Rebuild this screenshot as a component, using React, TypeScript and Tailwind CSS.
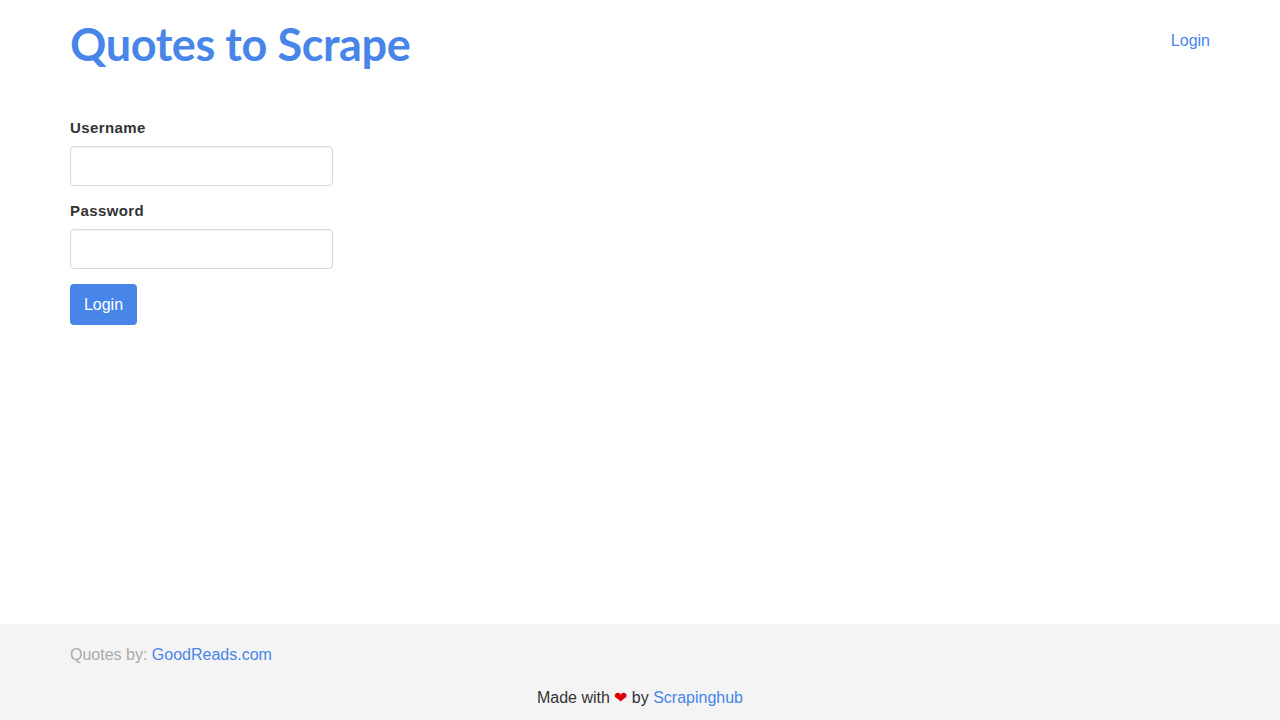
function App() {
  return (
    <div className="min-h-[720px] flex flex-col bg-white font-['Liberation_Sans',Arial,sans-serif] text-[14px] text-[#333]">
      <div className="flex-1 px-[70px]">
        {/* header */}
        <header className="flex items-start justify-between pt-[18px]">
          <h1 className="font-['Lato',sans-serif] font-bold text-[45px] leading-[52px] tracking-[-0.4px] text-[#4785e9]">
            <a href="/">Quotes to Scrape</a>
          </h1>
          <a href="/login" className="mt-[11px] text-[16px] text-[#4785e9]">
            Login
          </a>
        </header>

        {/* login form */}
        <form className="mt-[48px] w-[263px] flex flex-col">
          <label className="font-bold text-[15px] leading-[20px] mb-[8px] tracking-[0.4px]">Username</label>
          <input
            type="text"
            className="h-[40px] rounded-[4px] border border-[#d9d9d9] shadow-[inset_0_1px_1px_rgba(0,0,0,0.06)] mb-[15px]"
          />
          <label className="font-bold text-[15px] leading-[20px] mb-[8px] tracking-[0.4px]">Password</label>
          <input
            type="password"
            className="h-[40px] rounded-[4px] border border-[#d9d9d9] shadow-[inset_0_1px_1px_rgba(0,0,0,0.06)] mb-[15px]"
          />
          <button
            type="button"
            className="self-start h-[41px] w-[67px] rounded-[4px] bg-[#4785e9] text-white text-[16px]"
          >
            Login
          </button>
        </form>
      </div>

      {/* footer */}
      <footer className="bg-[#f4f4f4] h-[96px] px-[70px] pt-[21px] text-[16px]">
        <p className="text-[#aaa] leading-[20px]">
          Quotes by: <a href="https://www.goodreads.com/quotes" className="text-[#4785e9]">GoodReads.com</a>
        </p>
        <p className="text-center leading-[20px] mt-[23px]">
          Made with <span className="text-[#d00]">❤</span> by{" "}
          <a href="https://scrapinghub.com" className="text-[#4785e9]">Scrapinghub</a>
        </p>
      </footer>
    </div>
  );
}

export default App;
